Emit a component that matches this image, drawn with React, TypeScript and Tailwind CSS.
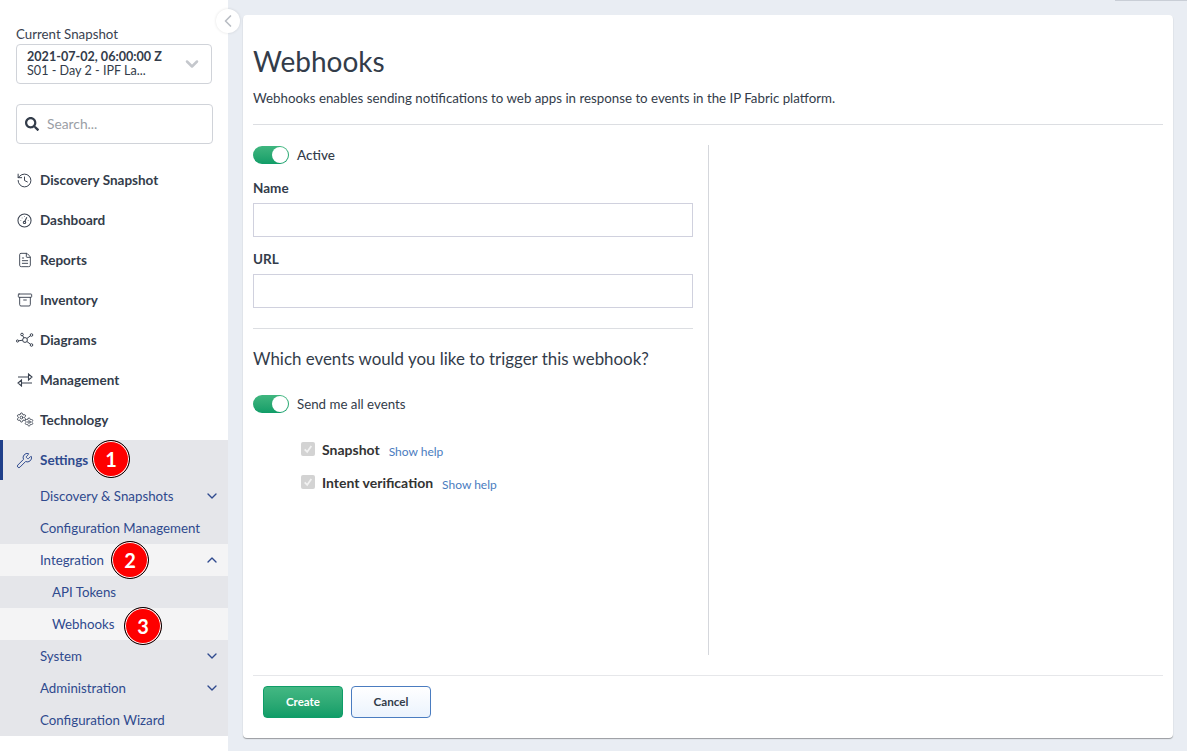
import { Archive, ChevronDown, ChevronLeft, ChevronUp, FileText, History, Settings, Wrench } from 'lucide-react';
import type { ReactNode } from 'react';
import { FaSearch } from 'react-icons/fa';

function DashboardIcon() {
  return <svg viewBox="0 0 16 16" className="h-[15px] w-[15px]" fill="none" stroke="currentColor" strokeWidth="1.1">
    <circle cx="8" cy="8" r="7" />
    <path d="M8 9.500 10.500 4.500" />
    <circle cx="8" cy="10" r="1.300" />
    <path d="M4 8v.5M5.500 5v.5M8 3.500V4M12 8v.5" />
  </svg>;
}

function DiagramIcon() {
  return <svg viewBox="0 0 18 16" className="h-[16px] w-[18px]" fill="none" stroke="currentColor" strokeWidth="1">
    <circle cx="9" cy="8" r="2.400" />
    <circle cx="6" cy="2.500" r="1.300" />
    <circle cx="15.500" cy="3" r="1.300" />
    <circle cx="15.500" cy="13" r="1.300" />
    <circle cx="1.500" cy="9" r="1.100" />
    <path d="M6.700 3.700 8 6M14.500 3.800 10.800 6.500M14.500 12.200 10.800 9.500M2.600 8.800 6.600 8.200" />
  </svg>;
}

function ManagementIcon() {
  return <svg viewBox="0 0 16 14" className="h-[14px] w-[16px]" fill="none" stroke="currentColor" strokeWidth="1.1">
    <path d="M1 4h11M11.500 1v6l3.500-3z" />
    <path d="M15 10H4M4.500 7v6L1 10z" />
  </svg>;
}

function TechnologyIcon() {
  return <div className="flex h-[16px] w-[18px]">
    <Settings className="h-[11px] w-[11px] shrink-0" strokeWidth={2} />
    <Settings className="-ml-[3px] mt-[5px] h-[10px] w-[10px] shrink-0" strokeWidth={2} />
  </div>;
}

function Badge({ n, className }: { n: number; className: string }) {
  return <span className={`absolute flex h-[38px] w-[38px] items-center justify-center rounded-full border border-black bg-[#fe0000] text-[20px] font-bold text-white shadow-[inset_0_0_0_1px_#fff] ${className}`}>{n}</span>;
}

function NavItem({ icon, label }: { icon: ReactNode; label: string }) {
  return <div className="flex h-10 items-center text-[#333c4a]">
    <div className="flex w-[40px] shrink-0 items-center justify-center pl-[10px] pr-[1px] text-[#3a4250]">{icon}</div>
    <span className="text-[13.5px] font-bold">{label}</span>
  </div>;
}

function SubItem({ label, open, closed, active, child, badge }: { label: string; open?: boolean; closed?: boolean; active?: boolean; child?: boolean; badge?: ReactNode }) {
  return <div className={`relative flex h-8 items-center pr-[8px] text-[13.3px] text-[#2f4a8e] ${child ? 'pl-[52px]' : 'pl-[40px]'} ${active ? 'bg-[#f4f4f5]' : ''}`}>
    <span className="flex-1 pt-[2px]">{label}</span>
    {closed ? <ChevronDown className="h-4 w-4" /> : null}
    {open ? <ChevronUp className="h-4 w-4" /> : null}
    {badge}
  </div>;
}

function Toggle() {
  return <div className="flex h-[18px] w-9 justify-end rounded-full bg-gradient-to-b from-[#3fb67f] to-[#0f9d68] p-[1px]">
    <div className="h-4 w-4 rounded-full bg-white" />
  </div>;
}

function EventRow({ label, mt }: { label: string; mt: string }) {
  return <div className={`flex items-start pl-[48px] ${mt}`}>
    <div className="mt-[1px] flex h-[14px] w-[14px] items-center justify-center rounded-[2px] bg-[#d3d3d3]">
      <svg viewBox="0 0 12 12" className="h-[10px] w-[10px]" fill="none" stroke="#f2f2f2" strokeWidth="2.2"><path d="M2 6.500 5 9.500 10 2.500" /></svg>
    </div>
    <span className="ml-[7px] text-[14px] leading-[18px] font-bold text-[#333]">{label}</span>
    <span className="mt-[2px] ml-[9px] text-[12px] leading-[18px] text-[#4a7cc0]">Show help</span>
  </div>;
}

export default function App() {
  return <div className="relative flex h-[751px] w-[1187px] overflow-hidden bg-[#e9edf3] font-['Lato','Noto_Sans',sans-serif] text-[#333c4a]">
    <aside className="relative flex w-[228px] shrink-0 flex-col bg-white">
      <div className="px-4 pt-[26px]">
        <div className="text-[13.3px] leading-4 text-[#3a4250]">Current Snapshot</div>
        <div className="mt-[2px] flex h-10 w-[196px] items-center rounded border border-[#d0d3d9] pr-[9px] pl-[10px]">
          <div className="flex-1 text-[12.6px] leading-[14px]">
            <div className="font-bold">2021-07-02, 06:00:00 Z</div>
            <div>S01 - Day 2 - IPF La...</div>
          </div>
          <ChevronDown className="h-[20px] w-[20px] text-[#c4c7cc]" strokeWidth={3} />
        </div>
        <div className="mt-5 flex h-10 w-[197px] items-center rounded border border-[#d0d3d9] pl-[8px]">
          <FaSearch className="h-[14px] w-[14px] text-[#333c4a]" />
          <span className="ml-[8px] text-[13.8px] text-[#9a9ea5]">Search...</span>
        </div>
      </div>
      <nav className="mt-4">
        <NavItem icon={<History className="h-[17px] w-[17px]" strokeWidth={1.4} />} label="Discovery Snapshot" />
        <NavItem icon={<DashboardIcon />} label="Dashboard" />
        <NavItem icon={<FileText className="h-[16px] w-[16px]" strokeWidth={1.4} />} label="Reports" />
        <NavItem icon={<Archive className="h-[16px] w-[16px]" strokeWidth={1.4} />} label="Inventory" />
        <NavItem icon={<DiagramIcon />} label="Diagrams" />
        <NavItem icon={<ManagementIcon />} label="Management" />
        <NavItem icon={<TechnologyIcon />} label="Technology" />
      </nav>
      <div className="bg-[#e5e6ea]">
        <div className="relative flex h-10 items-center border-l-[3px] border-[#1f3f8a] text-[#2f4a8e]">
          <div className="flex w-[37px] shrink-0 items-center justify-center pl-[7px] pr-[1px]"><Wrench className="h-[17px] w-[17px]" strokeWidth={1.4} /></div>
          <span className="text-[13.5px] font-bold">Settings</span>
          <Badge n={1} className="top-0 left-[89px]" />
        </div>
        <SubItem label="Discovery & Snapshots" closed />
        <SubItem label="Configuration Management" />
        <SubItem label="Integration" open active badge={<Badge n={2} className="top-[-3px] left-[111px]" />} />
        <SubItem label="API Tokens" child />
        <SubItem label="Webhooks" child active badge={<Badge n={3} className="top-[-1px] left-[124px]" />} />
        <SubItem label="System" closed />
        <SubItem label="Administration" closed />
        <SubItem label="Configuration Wizard" />
      </div>
      <div className="absolute top-[9px] left-[216px] flex h-6 w-6 items-center justify-center rounded-full bg-white shadow-[0_0_3px_rgba(0,0,0,0.12)]">
        <ChevronLeft className="h-[20px] w-[20px] text-[#b9bdc4]" strokeWidth={2} />
      </div>
    </aside>

    <main className="min-w-0 flex-1 pt-[15px] pr-[14px] pl-[15px]">
      <div className="flex h-[723px] flex-col rounded bg-white px-[10px] shadow-[0_1px_1px_rgba(0,0,0,0.35)]">
        <h1 className="pt-[29px] text-[28px] leading-[34px] font-normal text-[#333c4a]">Webhooks</h1>
        <p className="mt-[10px] text-[13.3px] leading-[20px] text-[#333c4a]">Webhooks enables sending notifications to web apps in response to events in the IP Fabric platform.</p>
        <div className="mt-[16px] border-t border-[#dcdee2]" />
        <div className="mt-[20px] flex h-[510px]">
          <div className="w-[456px] border-r border-[#d5d7dc] pr-[15px]">
            <div className="mt-[1px] flex h-[18px] items-center">
              <Toggle />
              <span className="ml-2 text-[13.5px] font-medium">Active</span>
            </div>
            <label className="mt-[15px] block text-[13.5px] leading-[18px] font-bold">Name</label>
            <div className="mt-[6px] h-[34px] border border-[#d0d1de]" />
            <label className="mt-[13px] block text-[13.5px] leading-[18px] font-bold">URL</label>
            <div className="mt-[6px] h-[34px] border border-[#d0d1de]" />
            <div className="mt-5 border-t border-[#dcdee2]" />
            <h2 className="mt-[17px] text-[16.9px] leading-[26px] font-normal">Which events would you like to trigger this webhook?</h2>
            <div className="mt-[23px] flex h-[18px] items-center">
              <Toggle />
              <span className="ml-2 pt-[2px] text-[13.3px]">Send me all events</span>
            </div>
            <EventRow label="Snapshot" mt="mt-[28px]" />
            <EventRow label="Intent verification" mt="mt-[13px]" />
          </div>
        </div>
        <div className="mt-[20px] flex gap-2 border-t border-[#e6e7ea] pt-[10px] pl-[10px]">
          <button type="button" className="h-8 w-20 rounded border border-[#0f9d68] bg-gradient-to-b from-[#43b883] to-[#0f9d68] text-[11.5px] font-bold text-white">Create</button>
          <button type="button" className="h-8 w-20 rounded border border-[#4a7cc0] bg-gradient-to-b from-white to-[#ebf3fd] text-[11.7px] font-bold text-[#333c4a]">Cancel</button>
        </div>
      </div>
    </main>
    <div className="absolute top-0 right-0 h-px w-[72px] bg-[#c9ced6]" />
  </div>;
}
